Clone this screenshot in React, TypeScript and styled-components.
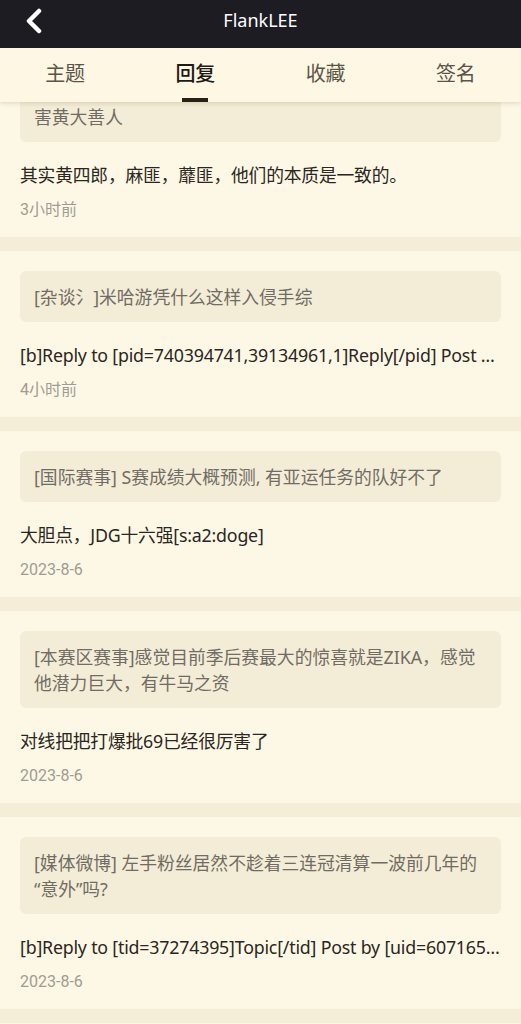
import React from "react";
import styled, { createGlobalStyle } from "styled-components";

const Global = createGlobalStyle`
  html, body { margin: 0; padding: 0; background: #f4eed8; overflow: hidden; }
  body { font-family: "Noto Sans", "Noto Sans CJK SC", sans-serif; }
  * { box-sizing: border-box; }
`;

const Page = styled.div`
  display: flex;
  flex-direction: column;
  width: 521px;
  height: 1024px;
  overflow: hidden;
`;

const Header = styled.header`
  position: relative;
  display: flex;
  align-items: center;
  justify-content: center;
  height: 48px;
  flex: none;
  background: #1d1c22;
`;

const BackButton = styled.button`
  position: absolute;
  left: 18px;
  top: 6px;
  width: 32px;
  height: 30px;
  padding: 0;
  border: none;
  background: transparent;
  display: flex;
  align-items: center;
  justify-content: center;
`;

const Title = styled.h1`
  margin: 0;
  margin-top: -8px;
  font-family: "Noto Sans", sans-serif;
  font-size: 18px;
  font-weight: 400;
  color: #ffffff;
`;

const TabBar = styled.nav`
  position: relative;
  z-index: 2;
  display: grid;
  grid-template-columns: repeat(4, 1fr);
  height: 54px;
  flex: none;
  background: #fdf7e4;
  box-shadow: 0 2px 4px rgba(120, 100, 60, 0.18);
`;

const Tab = styled.div<{ $active?: boolean }>`
  position: relative;
  display: flex;
  align-items: center;
  justify-content: center;
  padding-bottom: 6px;
  font-family: "Noto Sans CJK SC", sans-serif;
  font-size: 20px;
  font-weight: ${(p) => (p.$active ? 500 : 400)};
  color: ${(p) => (p.$active ? "#1e1a14" : "#5b5448")};
  &::after {
    content: "";
    display: ${(p) => (p.$active ? "block" : "none")};
    position: absolute;
    bottom: 0;
    left: 50%;
    transform: translateX(-50%);
    width: 26px;
    height: 4px;
    background: #2a2116;
  }
`;

const Viewport = styled.main`
  flex: 1;
  overflow: hidden;
`;

const List = styled.div`
  display: flex;
  flex-direction: column;
  gap: 14px;
  margin-top: -31px;
`;

const Card = styled.article`
  display: flex;
  flex-direction: column;
  padding: 20px 20px 17px;
  background: #fdf8e6;
`;

const Quote = styled.div`
  padding: 12.5px 14px;
  border-radius: 6px;
  background: #f3edd7;
  font-size: 17.8px;
  line-height: 26px;
  color: #716c63;
`;

const Reply = styled.p`
  margin: 20px 0 0;
  font-size: 17.8px;
  line-height: 26px;
  letter-spacing: -0.2px;
  color: #2a2620;
  white-space: nowrap;
  overflow: hidden;
  text-overflow: ellipsis;
`;

const Time = styled.div`
  margin-top: 12px;
  font-family: Roboto, "Noto Sans CJK SC", sans-serif;
  font-size: 16px;
  line-height: 20px;
  color: #a19c91;
`;

const items = [
  { quote: "害黄大善人", reply: "其实黄四郎，麻匪，蘼匪，他们的本质是一致的。", time: "3小时前" },
  { quote: "[杂谈氵]米哈游凭什么这样入侵手综", reply: "[b]Reply to [pid=740394741,39134961,1]Reply[/pid] Post by [uid=60716547]", time: "4小时前" },
  { quote: "[国际赛事] S赛成绩大概预测, 有亚运任务的队好不了", reply: "大胆点，JDG十六强[s:a2:doge]", time: "2023-8-6" },
  { quote: "[本赛区赛事]感觉目前季后赛最大的惊喜就是ZIKA，感觉他潜力巨大，有牛马之资", reply: "对线把把打爆批69已经很厉害了", time: "2023-8-6" },
  { quote: "[媒体微博] 左手粉丝居然不趁着三连冠清算一波前几年的\u200B“意外”吗?", reply: "[b]Reply to [tid=37274395]Topic[/tid] Post by [uid=60716547]FlankLEE[/uid] (2023-08-06 12:00)[/b]", time: "2023-8-6" },
  { quote: "[本赛区赛事] 季后赛观赛讨论", reply: "打得不错", time: "2023-8-5" },
];

export default function App() {
  return (
    <Page>
      <Global />
      <Header>
        <BackButton aria-label="back">
          <svg width="20" height="26" viewBox="0 0 20 26">
            <path d="M15 3 L5 13 L15 23" fill="none" stroke="#ffffff" strokeWidth="4.5" strokeLinecap="round" strokeLinejoin="round" />
          </svg>
        </BackButton>
        <Title>FlankLEE</Title>
      </Header>
      <TabBar>
        <Tab>主题</Tab>
        <Tab $active>回复</Tab>
        <Tab>收藏</Tab>
        <Tab>签名</Tab>
      </TabBar>
      <Viewport>
        <List>
          {items.map((it, i) => (
            <Card key={i}>
              <Quote>{it.quote}</Quote>
              <Reply>{it.reply}</Reply>
              <Time>{it.time}</Time>
            </Card>
          ))}
        </List>
      </Viewport>
    </Page>
  );
}
